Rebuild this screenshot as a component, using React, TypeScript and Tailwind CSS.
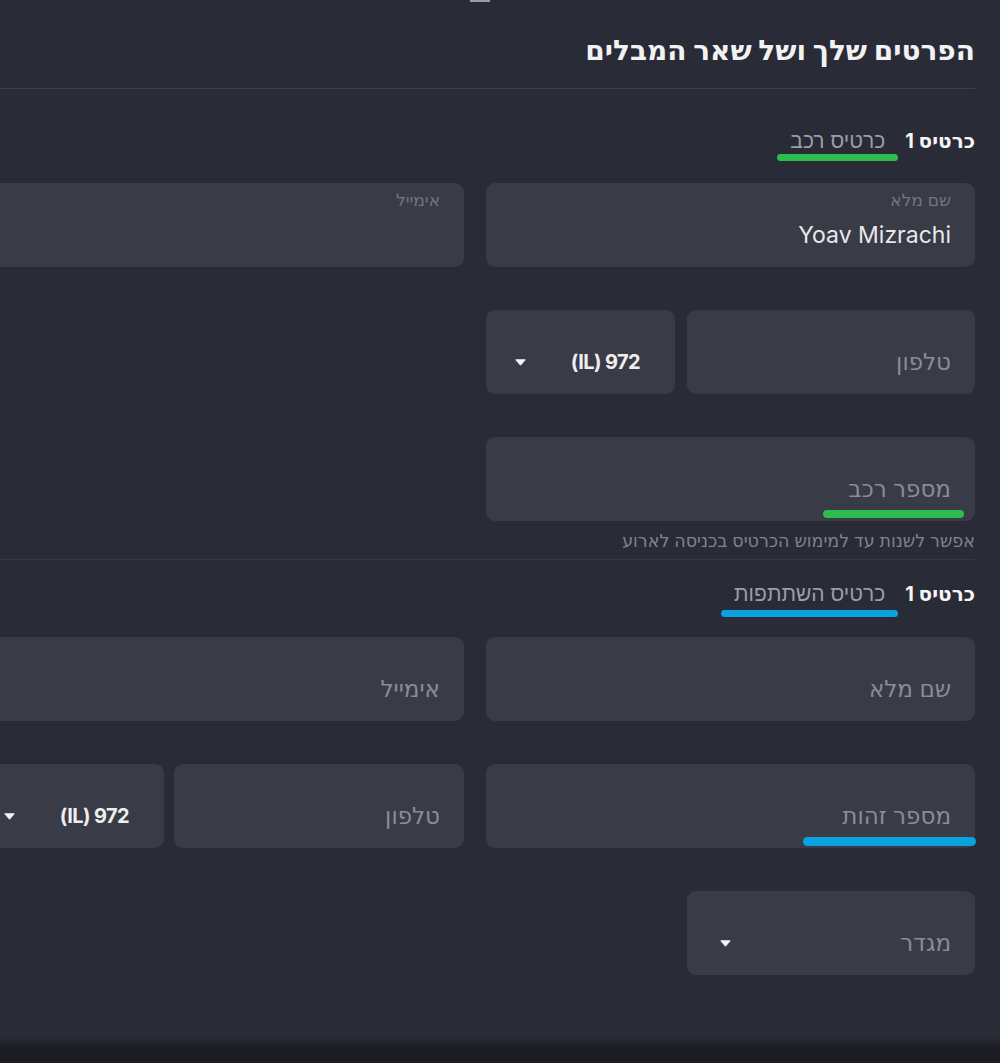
import React from "react";

const Caret = () => (
  <svg width="11" height="7" viewBox="0 0 11 7" className="shrink-0">
    <path d="M0.8 0.8 H10.2 L5.5 6.2 Z" fill="#f4f4f4" stroke="#f4f4f4" strokeWidth="1" strokeLinejoin="round" />
  </svg>
);

function Placeholder({ text, children }: { text: string; children?: React.ReactNode }) {
  return (
    <div className="relative h-[84px] rounded-[9px] bg-[#393b47] flex items-end pb-[17px] pr-[24px]">
      <span className="text-[23px] leading-[30px] text-[#8a8c96] whitespace-nowrap">{text}</span>
      {children}
    </div>
  );
}

function Filled({ label, value }: { label: string; value?: string }) {
  return (
    <div className="h-[84px] rounded-[9px] bg-[#393b47] flex flex-col justify-between pt-[7px] pb-[17px] pr-[24px]">
      <span className="text-[17px] leading-[20px] text-[#73757f]">{label}</span>
      <span className="text-[23px] leading-[30px] text-[#e8e8ea] h-[30px]">{value ?? ""}</span>
    </div>
  );
}

function Country() {
  return (
    <div className="h-[84px] rounded-[9px] bg-[#393b47] flex items-end pb-[17px] pr-[35px] pl-[29px]">
      <div className="flex-1 h-[30px] flex items-center justify-between">
        <span dir="ltr" className="text-[20px] leading-[30px] font-bold text-[#eeeeef] tracking-[-0.6px]">
          (IL) 972
        </span>
        <Caret />
      </div>
    </div>
  );
}

function Tabs({ label, color, barMt }: { label: string; color: string; barMt: string }) {
  return (
    <div className="flex items-start gap-[7px]">
      <span className="font-bold text-[20px] leading-[26px] text-[#f5f5f5] whitespace-nowrap">כרטיס 1</span>
      <div className="flex flex-col items-stretch">
        <span className="px-[13px] text-[21px] leading-[26px] font-light text-[#9c9ea7] whitespace-nowrap">{label}</span>
        <div className={`h-[7px] rounded-full ${color} ${barMt}`} />
      </div>
    </div>
  );
}

export default function App() {
  return (
    <div className="relative w-[1000px] h-[1063px] overflow-hidden bg-[#292b36] flex flex-col font-[family-name:Inter,'DejaVu_Sans',sans-serif]">
      <div className="absolute top-0 left-[470px] w-[20px] h-[2px] bg-[#9c9ca2]" />
      <div dir="rtl" className="w-[1000px] ml-[-25px] flex flex-col">
        <h1 className="pt-[32px] text-[28px] leading-[36px] font-bold text-[#f2f2f3] whitespace-nowrap">
          הפרטים שלך ושל שאר המבלים
        </h1>
        <div className="mt-[20px] h-px bg-[#3d3f4b]" />

        <div className="mt-[39px] mb-[22px]">
          <Tabs label="כרטיס רכב" color="bg-[#2dbd4f]" barMt="mt-0" />
        </div>

        <div className="grid grid-cols-2 gap-x-[22px] gap-y-[43px]">
          <Filled label="שם מלא" value="Yoav Mizrachi" />
          <Filled label="אימייל" />
          <div className="flex gap-[12px]">
            <div className="flex-1">
              <Placeholder text="טלפון" />
            </div>
            <div className="w-[189px]">
              <Country />
            </div>
          </div>
          <div />
          <Placeholder text="מספר רכב">
            <div className="absolute right-[11px] bottom-[3px] w-[141px] h-[8px] rounded-full bg-[#2dbd4f]" />
          </Placeholder>
        </div>

        <p className="mt-[10px] text-[17.5px] leading-[20px] text-[#80828d] whitespace-nowrap">
          אפשר לשנות עד למימוש הכרטיס בכניסה לארוע
        </p>
        <div className="mt-[8px] h-px bg-[#363844]" />

        <div className="mt-[21px] mb-[20px]">
          <Tabs label="כרטיס השתתפות" color="bg-[#0ba2e2]" barMt="mt-[3px]" />
        </div>

        <div className="grid grid-cols-2 gap-x-[22px] gap-y-[43px]">
          <Placeholder text="שם מלא" />
          <Placeholder text="אימייל" />
          <Placeholder text="מספר זהות">
            <div className="absolute right-[-1px] bottom-[2px] w-[173px] h-[9px] rounded-full bg-[#0ba2e2]" />
          </Placeholder>
          <div className="flex gap-[10px]">
            <div className="flex-1">
              <Placeholder text="טלפון" />
            </div>
            <div className="w-[189px]">
              <Country />
            </div>
          </div>
          <div className="flex">
            <div className="w-[288px] h-[84px] rounded-[9px] bg-[#393b47] flex items-end pb-[17px] pr-[24px] pl-[33px]">
              <div className="flex-1 h-[30px] flex items-center justify-between">
                <span className="text-[23px] leading-[30px] text-[#8a8c96]">מגדר</span>
                <Caret />
              </div>
            </div>
          </div>
        </div>
      </div>
      <div className="mt-auto h-[8px] bg-gradient-to-b from-[#292b36] to-[#1f2127]" />
      <div className="h-[18px] bg-[#1b1d22]" />
    </div>
  );
}
